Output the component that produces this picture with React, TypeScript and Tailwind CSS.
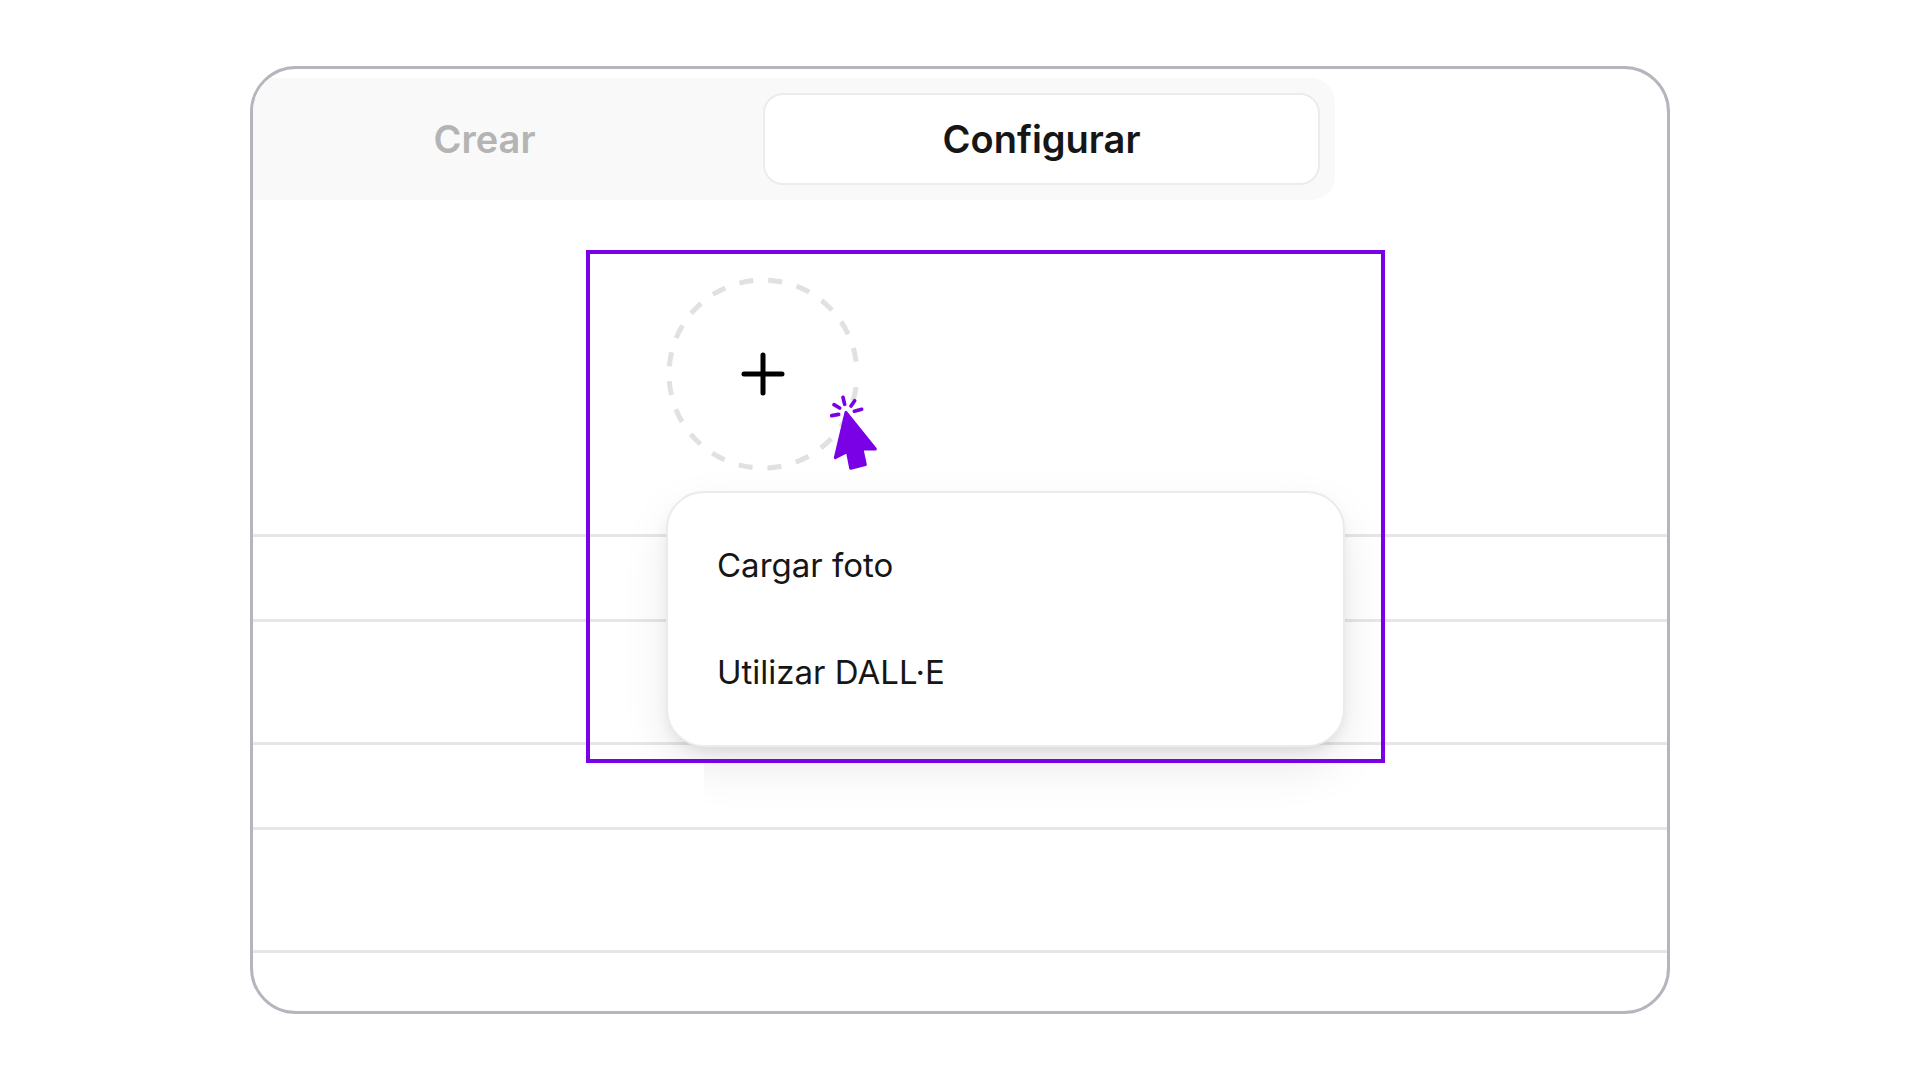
type TabButtonProps = {
  label: string;
  active?: boolean;
};

function TabButton({ label, active = false }: TabButtonProps) {
  return (
    <button
      type="button"
      role="tab"
      aria-selected={active}
      className={
        active
          ? 'flex-1 rounded-[20px] border-2 border-[#ececec] bg-white py-5 text-[38px] leading-[48px] font-semibold text-[#161616]'
          : 'flex-1 rounded-[20px] border-2 border-transparent py-5 text-[38px] leading-[48px] font-semibold text-[#b4b4b4]'
      }
    >
      {label}
    </button>
  );
}

function ClickCursor() {
  return (
    <svg
      viewBox="0 0 300 300"
      className="pointer-events-none absolute top-[103px] left-[134px] size-[100px]"
      aria-hidden="true"
    >
      <path
        d="M138 97 L106 233 L142 214 L152 265 L196 254 L186 207 L226 207 Z"
        fill="#7a00e6"
        stroke="#7a00e6"
        strokeWidth="9"
        strokeLinejoin="round"
      />
      <path
        d="M95 107 L116 103 M102 74 L119 84 M129 52 L134 73 M164 62 L153 78 M163 94 L185 88"
        stroke="#7a00e6"
        strokeWidth="11"
        strokeLinecap="round"
      />
    </svg>
  );
}

function PhotoButton() {
  return (
    <div className="relative z-10 size-[194px]">
      <button type="button" aria-label="+" className="block size-full rounded-full">
        <svg viewBox="0 0 194 194" fill="none" className="size-full">
          <path
            d="M190.1 110.1 A94 94 0 1 1 190.2 84.7"
            pathLength="344.5"
            stroke="#e1e1e1"
            strokeWidth="5"
            strokeDasharray="8.6 9.08"
          />
          <path d="M97 78 V116 M78 97 H116" stroke="#000" strokeWidth="5" strokeLinecap="round" />
        </svg>
      </button>
      <ClickCursor />
    </div>
  );
}

function PhotoMenu() {
  return (
    <div
      role="menu"
      className="flex flex-col rounded-[38px] border-2 border-[#ebebeb] bg-white py-[19px] text-[33px] leading-[43px] text-[#161616] shadow-[0_20px_50px_-4px_rgba(0,0,0,0.10),0_6px_14px_-4px_rgba(0,0,0,0.10)]"
    >
      <button type="button" role="menuitem" className="px-[49px] py-8 text-left">
        Cargar foto
      </button>
      <button type="button" role="menuitem" className="px-[49px] py-8 text-left">
        Utilizar DALL·E
      </button>
    </div>
  );
}

export default function App() {
  return (
    <main className="flex justify-center bg-white px-8 py-[66px] font-['Inter',sans-serif]">
      <div className="flex w-full max-w-[1420px] flex-col overflow-hidden rounded-[46px] border-3 border-[#b6b5bd] bg-white pt-[9px]">
        <div
          role="tablist"
          className="-ml-[62px] flex max-w-[1144px] rounded-[24px] bg-[#f9f9f9] p-[15px]"
        >
          <TabButton label="Crear" />
          <TabButton label="Configurar" active />
        </div>

        {/* the form and the highlighted picker share one grid cell */}
        <div className="grid">
          <div className="col-start-1 row-start-1 flex flex-col gap-[120px] pt-[334px]">
            <div className="h-[88px] border-y-3 border-[#e6e6e6]" />
            <div className="h-[88px] border-y-3 border-[#e6e6e6]" />
            <div className="h-[61px] border-t-3 border-[#e6e6e6]" />
          </div>

          <div className="col-start-1 row-start-1 flex items-start pt-[50px] pl-[333px]">
            <section className="relative flex w-full max-w-[799px] flex-col gap-5 pt-[27px] pr-10 pb-4 pl-20 after:pointer-events-none after:absolute after:inset-0 after:border-4 after:border-[#7a00e6]">
              <PhotoButton />
              <PhotoMenu />
              <div className="absolute top-full left-0 h-[60px] w-[118px] bg-white" />
            </section>
          </div>
        </div>
      </div>
    </main>
  );
}
